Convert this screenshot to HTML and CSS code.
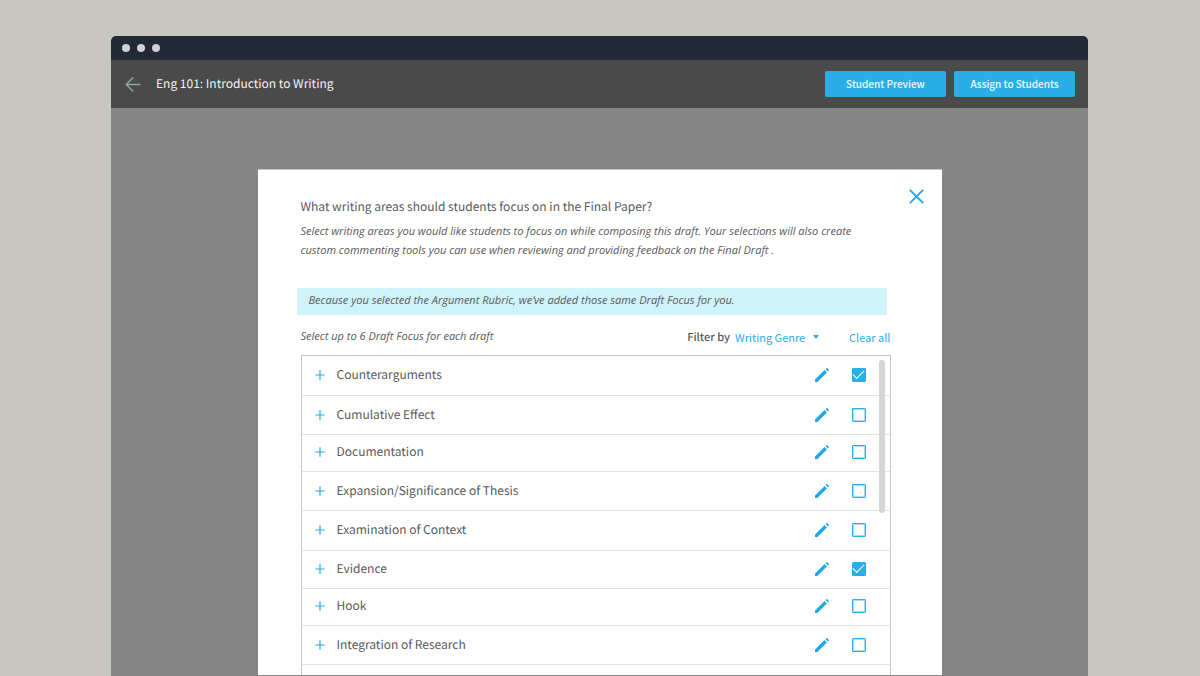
FILE: index.html
```html
<!DOCTYPE html>
<html lang="en">
<head>
<meta charset="utf-8">
<meta name="viewport" content="width=device-width, initial-scale=1">
<title>Eng 101: Introduction to Writing</title>
<link rel="stylesheet" href="styles.css">
</head>
<body>
<svg class="defs" width="0" height="0" aria-hidden="true">
  <symbol id="plus" viewBox="0 0 10 10"><path d="M5 .3v9.4M.3 5h9.4" fill="none" stroke="currentColor" stroke-width="1.2"/></symbol>
  <symbol id="pencil" viewBox="0 0 14 14"><path d="M0 14v-2.4L9.6 2.1l2.3 2.3L2.4 14zM10.6 1.1l.7-.8q.5-.5 1 0l1.4 1.4q.5.5 0 1l-.8.7z" fill="currentColor"/></symbol>
</svg>
<div class="window">
  <div class="titlebar"><span class="dot"></span><span class="dot"></span><span class="dot"></span></div>
  <header class="appbar">
    <button class="back" type="button" aria-label="Back">
      <svg width="16" height="16" viewBox="0 0 16 16" fill="none" stroke="currentColor" stroke-width="1.4"><path d="M15.5 8.5H1.2M8.2 1.5L1.2 8.5l7 7"/></svg>
    </button>
    <h1 class="course">Eng 101: Introduction to Writing</h1>
    <div class="actions">
      <button class="primary" type="button">Student Preview</button>
      <button class="primary" type="button">Assign to Students</button>
    </div>
  </header>
  <main class="backdrop">
    <section class="modal" role="dialog" aria-labelledby="question">
      <button class="close" type="button" aria-label="Close">
        <svg width="15" height="15" viewBox="0 0 15 15" fill="none" stroke="currentColor" stroke-width="1.8"><path d="M.8.8l13.4 13.4M14.2.8L.8 14.2"/></svg>
      </button>
      <h2 class="question" id="question">What writing areas should students focus on in the Final Paper?</h2>
      <p class="intro">Select writing areas you would like students to focus on while composing this draft. Your selections will also create<br>custom commenting tools you can use when reviewing and providing feedback on the Final Draft .</p>
      <p class="notice">Because you selected the Argument Rubric, we’ve added those same Draft Focus for you.</p>
      <div class="toolbar">
        <p class="hint">Select up to 6 Draft Focus for each draft</p>
        <label class="filter-label" for="genre">Filter by</label>
        <span class="filter">
          <select class="genre" id="genre"><option>Writing Genre</option></select>
          <svg class="caret" width="6" height="4" viewBox="0 0 6 4"><path d="M0 0h6L3 4z" fill="currentColor"/></svg>
        </span>
        <button class="clear" type="button">Clear all</button>
      </div>
      <div class="list">
        <ul class="rows">
          <li class="row tall"><button class="icon" type="button" aria-label="Expand"><svg width="10" height="10"><use href="#plus"/></svg></button><label class="name" for="f1">Counterarguments</label><button class="icon" type="button" aria-label="Edit"><svg width="14" height="14"><use href="#pencil"/></svg></button><input class="check" type="checkbox" id="f1" checked></li>
          <li class="row"><button class="icon" type="button" aria-label="Expand"><svg width="10" height="10"><use href="#plus"/></svg></button><label class="name" for="f2">Cumulative Effect</label><button class="icon" type="button" aria-label="Edit"><svg width="14" height="14"><use href="#pencil"/></svg></button><input class="check" type="checkbox" id="f2"></li>
          <li class="row short"><button class="icon" type="button" aria-label="Expand"><svg width="10" height="10"><use href="#plus"/></svg></button><label class="name" for="f3">Documentation</label><button class="icon" type="button" aria-label="Edit"><svg width="14" height="14"><use href="#pencil"/></svg></button><input class="check" type="checkbox" id="f3"></li>
          <li class="row"><button class="icon" type="button" aria-label="Expand"><svg width="10" height="10"><use href="#plus"/></svg></button><label class="name" for="f4">Expansion/Significance of Thesis</label><button class="icon" type="button" aria-label="Edit"><svg width="14" height="14"><use href="#pencil"/></svg></button><input class="check" type="checkbox" id="f4"></li>
          <li class="row tall"><button class="icon" type="button" aria-label="Expand"><svg width="10" height="10"><use href="#plus"/></svg></button><label class="name" for="f5">Examination of Context</label><button class="icon" type="button" aria-label="Edit"><svg width="14" height="14"><use href="#pencil"/></svg></button><input class="check" type="checkbox" id="f5"></li>
          <li class="row medium"><button class="icon" type="button" aria-label="Expand"><svg width="10" height="10"><use href="#plus"/></svg></button><label class="name" for="f6">Evidence</label><button class="icon" type="button" aria-label="Edit"><svg width="14" height="14"><use href="#pencil"/></svg></button><input class="check" type="checkbox" id="f6" checked></li>
          <li class="row short"><button class="icon" type="button" aria-label="Expand"><svg width="10" height="10"><use href="#plus"/></svg></button><label class="name" for="f7">Hook</label><button class="icon" type="button" aria-label="Edit"><svg width="14" height="14"><use href="#pencil"/></svg></button><input class="check" type="checkbox" id="f7"></li>
          <li class="row"><button class="icon" type="button" aria-label="Expand"><svg width="10" height="10"><use href="#plus"/></svg></button><label class="name" for="f8">Integration of Research</label><button class="icon" type="button" aria-label="Edit"><svg width="14" height="14"><use href="#pencil"/></svg></button><input class="check" type="checkbox" id="f8"></li>
        </ul>
        <div class="thumb"></div>
      </div>
    </section>
  </main>
</div>
</body>
</html>
```
FILE: styles.css
```css
* { box-sizing: border-box; }

body {
  margin: 0;
  background: #c7c7bf;
  color: #58595b;
  font: 12px/18px "Noto Sans CJK SC", "Open Sans", sans-serif;
  text-rendering: geometricPrecision;
}

h1, h2, p, ul { margin: 0; padding: 0; font-weight: 400; }
button, select { margin: 0; padding: 0; border: 0; background: none; font: inherit; color: inherit; cursor: pointer; }
svg { display: block; }
.defs { position: absolute; }

.window {
  display: flex;
  flex-direction: column;
  height: 100vh;
  padding: 36px 112px 0 111px;
}

.titlebar {
  display: flex;
  align-items: center;
  gap: 7px;
  height: 24px;
  padding: 0 11px;
  border-radius: 5px 5px 0 0;
  background: #232937;
}
.dot { width: 8px; height: 8px; border-radius: 50%; background: #cfd0d4; }

.appbar {
  display: flex;
  align-items: center;
  height: 48px;
  padding: 0 13px 0 14px;
  background: #4a4a4a;
  color: #f2f2f2;
}
.back { color: #93a3ad; }
.course { flex: 1; margin-left: 15px; font-size: 12px; }
.actions { display: flex; gap: 8px; }
.primary {
  width: 121px;
  height: 26px;
  border-radius: 2px;
  background: #29aee8;
  color: #eefaff;
  font-size: 10px;
  font-weight: 500;
}

.backdrop {
  display: flex;
  flex: 1;
  justify-content: center;
  min-height: 0;
  padding: 61px 16px 1px;
  background: #868686;
}
.modal {
  position: relative;
  width: 100%;
  max-width: 684px;
  padding: 28px 51px 0 43px;
  border-top: 1px solid #c4c4c4;
  background: #fff;
  overflow: hidden;
}
.close { position: absolute; top: 19px; right: 18px; color: #1ba8e8; }
.question { font-size: 12px; }
.intro { margin-top: 6px; font: italic 11px/19px "Open Sans", sans-serif; }
.notice {
  margin: 28px 4px 0 -4px;
  padding: 4px 12px 5px;
  background: #cff3f9;
  font: italic 11px/18px "Open Sans", sans-serif;
}
.toolbar { display: flex; align-items: center; margin-top: 13px; font-size: 11px; }
.hint { flex: 1; font: italic 11px/18px "Open Sans", sans-serif; }
.filter-label { font-weight: 500; }
.filter { display: flex; align-items: center; margin-left: 5px; color: #29aee8; }
.genre { appearance: none; }
.caret { margin-left: 7px; }
.clear { margin-left: 30px; color: #29aee8; }

.list {
  position: relative;
  height: 400px;
  margin-top: 9px;
  border: 1px solid #c6c6c8;
}
.rows { list-style: none; }
.row {
  display: flex;
  align-items: center;
  height: 39px;
  padding: 0 24px 0 13px;
  border-bottom: 1px solid #e3e3e3;
}
.tall { height: 40px; padding-bottom: 2px; }
.medium { height: 38px; padding-bottom: 2px; }
.short { height: 37px; padding-bottom: 2px; }
.icon { color: #1ea9e8; }
.name { flex: 1; margin-left: 12px; font-size: 12px; }
.check {
  display: grid;
  place-items: center;
  width: 14px;
  height: 14px;
  margin: 0 0 0 23px;
  border: 1px solid #29aee8;
  border-radius: 1px;
  box-shadow: inset 0 0 0 1px #a9def6;
  appearance: none;
}
.check:checked { background: #29aee8; box-shadow: none; }
.check:checked::before {
  content: "";
  width: 10px;
  height: 5px;
  margin-top: -3px;
  border: solid #fff;
  border-width: 0 0 1px 1px;
  transform: rotate(-45deg);
}
.thumb {
  position: absolute;
  top: 4px;
  right: 5px;
  width: 6px;
  height: 153px;
  border-radius: 3px;
  background: #d6d6d6;
}
```
